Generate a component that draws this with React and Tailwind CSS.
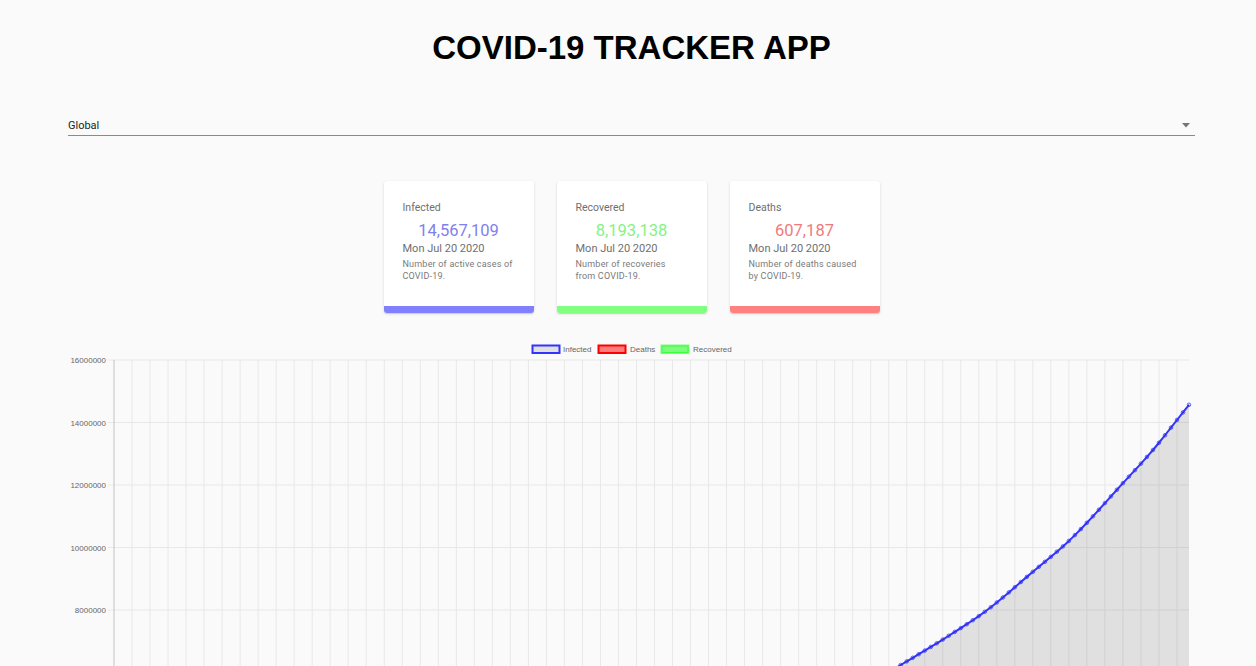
import { useMemo } from "react";

const cards = [
  {
    label: "Infected",
    value: "14,567,109",
    color: "text-[#7f7fee]",
    bar: "bg-[#8080ff]",
    lines: ["Number of active cases of", "COVID-19."],
  },
  {
    label: "Recovered",
    value: "8,193,138",
    color: "text-[#86f286]",
    bar: "bg-[#80ff80]",
    lines: ["Number of recoveries", "from COVID-19."],
  },
  {
    label: "Deaths",
    value: "607,187",
    color: "text-[#f07a7a]",
    bar: "bg-[#ff8080]",
    lines: ["Number of deaths caused", "by COVID-19."],
  },
];

// rough global totals (millions) by day index, Jan 22 .. Jul 20
const anchors = [
  [0, 0.0006], [10, 0.012], [24, 0.07], [39, 0.09], [53, 0.17], [62, 0.45],
  [70, 0.93], [77, 1.45], [84, 2.0], [92, 2.6], [100, 3.3], [107, 3.9],
  [114, 4.55], [120, 5.05], [125, 5.55], [131, 6.24], [138.7, 7.14],
  [145.4, 8.0], [152, 9.06], [159.7, 10.34], [168, 12.06], [173, 13.12],
  [177, 14.08], [179, 14.567],
];

const N = 180;
const X0 = 114;
const X1 = 1189;
const Y_TOP = 360;
const PER_M = 31.25;

// monotone cubic through the anchors so the line has no kinks
const slopes = (() => {
  const d = [];
  for (let k = 0; k < anchors.length - 1; k++) {
    d.push((anchors[k + 1][1] - anchors[k][1]) / (anchors[k + 1][0] - anchors[k][0]));
  }
  const m = [d[0]];
  for (let k = 1; k < anchors.length - 1; k++) {
    m.push(d[k - 1] * d[k] <= 0 ? 0 : (d[k - 1] + d[k]) / 2);
  }
  m.push(d[d.length - 1]);
  return m;
})();

function valueAt(i) {
  for (let k = 0; k < anchors.length - 1; k++) {
    const [a, va] = anchors[k];
    const [b, vb] = anchors[k + 1];
    if (i >= a && i <= b) {
      const h = b - a;
      const t = (i - a) / h;
      const t2 = t * t;
      const t3 = t2 * t;
      return (
        (2 * t3 - 3 * t2 + 1) * va +
        (t3 - 2 * t2 + t) * h * slopes[k] +
        (-2 * t3 + 3 * t2) * vb +
        (t3 - t2) * h * slopes[k + 1]
      );
    }
  }
  return anchors[anchors.length - 1][1];
}

const px = (i) => X0 + (i * (X1 - X0)) / (N - 1);
const py = (v) => Y_TOP + (16 - v) * PER_M;

function StatCard({ card }) {
  return (
    <div className="w-[150px] h-[132px] bg-white rounded-[3px] shadow-[0_1px_3px_rgba(0,0,0,0.12),0_1px_1px_rgba(0,0,0,0.1)] flex flex-col overflow-hidden">
      <div className="flex-1 pt-[19px] px-[19px]">
        <p className="text-[10.5px] leading-[16px] text-[#6f6f6f]">{card.label}</p>
        <p className={`mt-[5px] text-center text-[16.5px] leading-[20px] ${card.color}`}>{card.value}</p>
        <p className="mt-[1px] text-[11px] leading-[14px] text-[#6f6f6f] whitespace-nowrap">Mon Jul 20 2020</p>
        <p className="mt-[2px] text-[9px] leading-[12px] tracking-[0.2px] text-[#7a7a7a] whitespace-nowrap">
          {card.lines[0]}
          <br />
          {card.lines[1]}
        </p>
      </div>
      <div className={`h-[7px] ${card.bar}`} />
    </div>
  );
}

function Chart() {
  const { infected, deaths } = useMemo(() => {
    const inf = [];
    const dth = [];
    for (let i = 0; i < N; i++) {
      const v = valueAt(i);
      inf.push([px(i), py(v)]);
      dth.push([px(i), py(v * 0.0417)]);
    }
    return { infected: inf, deaths: dth };
  }, []);

  const base = py(0);
  const line = (pts) => pts.map(([x, y], i) => `${i ? "L" : "M"}${x.toFixed(2)} ${y.toFixed(2)}`).join(" ");
  const area = (pts) => `${line(pts)} L${X1} ${base} L${X0} ${base} Z`;

  const vLines = [];
  for (let k = 1; k * 3 < N; k++) vLines.push(px(k * 3));
  const hTicks = [];
  for (let k = 0; k <= 8; k++) hTicks.push({ y: Y_TOP + k * 62.5, label: String((16 - 2 * k) * 1000000) });

  return (
    <svg width="1256" height="570" viewBox="0 330 1256 570" className="block" style={{ fontFamily: "'Liberation Sans', Arial, sans-serif" }}>
      {/* legend */}
      <rect x="532.5" y="345.5" width="27" height="7.5" fill="rgba(0,0,0,0.1)" stroke="#3333ff" strokeWidth="2" />
      <text x="563" y="352" fontSize="8" fill="#666">Infected</text>
      <rect x="598.5" y="345.5" width="27" height="7.5" fill="rgba(255,0,0,0.5)" stroke="#ff0000" strokeWidth="2" />
      <text x="630" y="352" fontSize="8" fill="#666">Deaths</text>
      <rect x="661.5" y="345.5" width="27" height="7.5" fill="rgba(0,255,0,0.5)" stroke="rgba(0,255,0,0.5)" strokeWidth="2" />
      <text x="693" y="352" fontSize="8" fill="#666">Recovered</text>

      {/* grid */}
      {vLines.map((x, i) => (
        <line key={i} x1={x} x2={x} y1={Y_TOP} y2={base + 6} stroke="#e8e8e8" strokeWidth="1" />
      ))}
      {hTicks.map((t) => (
        <g key={t.label}>
          <line x1="108" x2={X1} y1={t.y} y2={t.y} stroke="#e8e8e8" strokeWidth="1" />
          <text x="106" y={t.y + 3} fontSize="8" fill="#666" textAnchor="end">{t.label}</text>
        </g>
      ))}
      <line x1={X0} x2={X0} y1={Y_TOP} y2={base + 6} stroke="#c2c2c2" strokeWidth="1" />

      {/* deaths */}
      <path d={area(deaths)} fill="rgba(255,0,0,0.5)" />
      <path d={line(deaths)} fill="none" stroke="#ff0000" strokeWidth="2" />

      {/* infected */}
      <path d={area(infected)} fill="rgba(0,0,0,0.1)" />
      <path d={line(infected)} fill="none" stroke="#3333ff" strokeWidth="2" strokeLinejoin="round" />
      {infected.map(([x, y], i) => (
        <circle key={i} cx={x} cy={y} r="1.8" fill="rgba(0,0,0,0.1)" stroke="#3333ff" strokeWidth="0.7" />
      ))}
    </svg>
  );
}

export default function App() {
  return (
    <div className="min-h-screen bg-[#fafafa] font-['Roboto',sans-serif]">
      <div className="pl-[7px] flex flex-col items-center">
        <h1 className="mt-[28px] h-[40px] text-[33px] leading-[40px] font-bold text-black font-['Liberation_Sans',Arial,sans-serif]">
          COVID-19 TRACKER APP
        </h1>
      </div>
      <div className="ml-[68px] w-[1127px] mt-[44px] h-[24px] pb-[3px] border-b border-[#8a8a8a] flex items-end justify-between">
        <span className="text-[11px] leading-[13px] text-[#222]">Global</span>
        <svg width="8" height="5" viewBox="0 0 8 5" className="mr-[5px] mb-[4px]">
          <path d="M0 0 L8 0 L4 4.5 Z" fill="#757575" />
        </svg>
      </div>
      <div className="pl-[7px] mt-[45px] flex justify-center gap-[23px]">
        {cards.map((c) => (
          <StatCard key={c.label} card={c} />
        ))}
      </div>
      <div className="mt-[17px]">
        <Chart />
      </div>
    </div>
  );
}
